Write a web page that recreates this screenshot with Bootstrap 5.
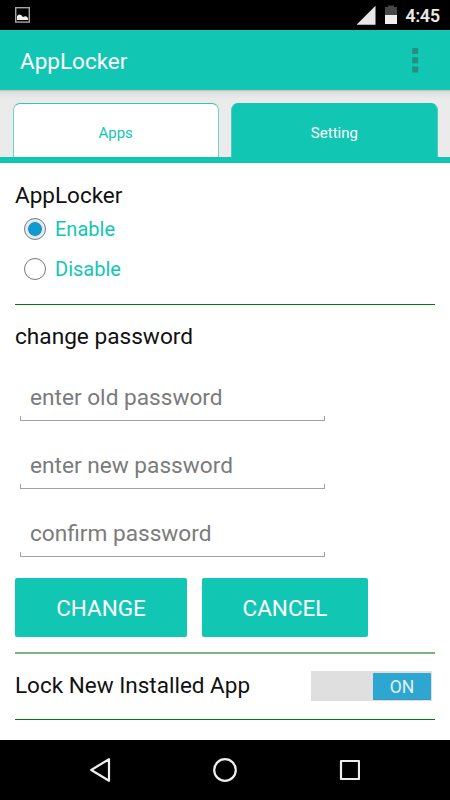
<!DOCTYPE html>
<html lang="en">
<head>
<meta charset="utf-8">
<meta name="viewport" content="width=device-width, initial-scale=1">
<title>AppLocker</title>
<link href="https://cdn.jsdelivr.net/npm/bootstrap@5.3.0/dist/css/bootstrap.min.css" rel="stylesheet">
<style>
:root { --teal: #12c6b4; }
body { font-family: Roboto, "Noto Sans", sans-serif; font-size: 22.5px; line-height: 30px; color: #111; }
.screen { width: 450px; height: 800px; }
.status-bar { height: 30px; padding: 0 10px 0 15px; }
.clock { font-size: 17.5px; font-weight: 500; color: #ebebeb; margin-left: 8px; padding-top: 1px; -webkit-text-stroke: .2px #ebebeb; }
.app-bar { height: 60px; padding: 1px 31px 0 20px; background: var(--teal); }
.tab-strip { height: 73px; padding: 13px 12.5px 0 12.5px; gap: 12.5px; border-bottom: 6px solid var(--teal);
  background: linear-gradient(#c4bfbe, #dedede 2px, #e5e5e5 5px, #ebebeb 10px); }
.tab-strip .nav-link { font-size: 15px; line-height: 20px; height: 54px; padding: 4px 0 0; color: var(--teal);
  background: #fff; border: 1px solid #6fd2c5; border-top-color: #35c5b5; border-bottom: 0; border-radius: 7px 7px 0 0; }
.tab-strip .nav-link.active { background: var(--teal); color: #fff; border-color: #4fcbbd; border-top-color: var(--teal); }
.content { padding: 17px 15px 0; height: 577px; }
.title { height: 29px; }
.choice { height: 40px; padding-left: 9px; gap: 9px; font-size: 20px; color: var(--teal); }
.choice .form-check-input { width: 22px; height: 22px; margin: 0; border: 1px solid #777; background: #fff; box-shadow: none; }
.choice .form-check-input:checked { border-color: #777;
  background: radial-gradient(circle, #0c9cd3 0 5.5px, #3b87a5 6.2px 6.5px, #cfeaf6 7.2px, #dcf0f8 9px, #e8f5fa 10px); }
.rule { height: 1px; background: #087808; }
.rule-soft { height: 2px; background: #7eb27e; }
.subhead { margin: 17px 0 31px; font-size: 22.65px; }
.field { width: 305px; height: 38px; margin: 0 0 30px 5px; }
.field input { font-size: 22.65px; line-height: 28px; height: 29px; padding: 0 10px; background: none; }
.field input::placeholder { color: #7b7b7b; opacity: 1; }
.field-base { height: 5px; margin-top: 4px; border: 1px solid #a2a2a2; border-top: 0; }
.action { height: 59px; padding: 3px 0 0; font-size: 22.5px; border: 0; border-radius: 2px; background: var(--teal); color: #fff; }
.action:hover { background: var(--teal); color: #fff; }
.change { width: 172px; }
.cancel { width: 166px; }
.lock-row { height: 65px; padding-bottom: 1px; }
.lock-row > span { padding-bottom: 2px; }
.toggle { width: 121px; height: 30px; padding: 2px; background: #dfdfdf; margin-right: 3px; }
.knob { width: 58px; height: 27px; margin-right: -1px; font-size: 17.5px; line-height: 28px; color: #e2f2fa; background: #2ea6d2; border-radius: 1px; border-bottom: 1px solid #3d97b8; }
.nav-keys { height: 60px; }
</style>
</head>
<body>
<div class="screen d-flex flex-column bg-white overflow-hidden">
  <div class="status-bar d-flex align-items-center bg-black">
    <svg width="15" height="16" viewBox="0 0 15 16"><rect x=".7" y=".7" width="13.6" height="14.4" fill="none" stroke="#a5a5a5" stroke-width="1.4"/><path d="M2 13V9L4 7.6l2 .3 2 2.2 2-.8 1.5.2L13 11v2z" fill="#f0f0f0"/></svg>
    <svg class="ms-auto" width="20" height="20" viewBox="0 0 20 20"><path d="M-.5 19.7 18.5 .8v18.9z" fill="#e8e8e8"/></svg>
    <svg width="12" height="20" viewBox="0 0 12 20" style="margin:0 1px 0 8px"><path d="M0 2h3V.5h6V2h3v8H0z" fill="#474747"/><path d="M0 10h12v9H0z" fill="#efefef"/></svg>
    <span class="clock">4:45</span>
  </div>
  <header class="app-bar d-flex align-items-center justify-content-between text-white">
    <span>AppLocker</span>
    <svg width="7" height="26" viewBox="0 0 7 26"><path d="M.2 0h6v6h-6zM.2 9.3h6v6h-6zM.2 18.4h6v6h-6z" fill="#258f82"/></svg>
  </header>
  <nav class="tab-strip nav nav-fill flex-nowrap">
    <a class="nav-link flex-fill w-50 d-flex align-items-center justify-content-center" href="#">Apps</a>
    <a class="nav-link active flex-fill w-50 d-flex align-items-center justify-content-center" href="#">Setting</a>
  </nav>
  <main class="content">
    <div class="title">AppLocker</div>
    <label class="choice d-flex align-items-center"><input class="form-check-input" type="radio" name="lock" checked>Enable</label>
    <label class="choice d-flex align-items-center"><input class="form-check-input" type="radio" name="lock">Disable</label>
    <div class="rule" style="margin-top:15px"></div>
    <div class="subhead">change password</div>
    <div class="field"><input class="border-0 w-100 d-block" type="text" placeholder="enter old password"><div class="field-base"></div></div>
    <div class="field"><input class="border-0 w-100 d-block" type="text" placeholder="enter new password"><div class="field-base"></div></div>
    <div class="field mb-0"><input class="border-0 w-100 d-block" type="text" placeholder="confirm password"><div class="field-base"></div></div>
    <div class="d-flex" style="gap:15px;margin-top:21px">
      <button class="btn action change">CHANGE</button>
      <button class="btn action cancel">CANCEL</button>
    </div>
    <div class="rule-soft" style="margin-top:15px"></div>
    <div class="lock-row d-flex align-items-center justify-content-between">
      <span>Lock New Installed App</span>
      <div class="toggle d-flex justify-content-end"><div class="knob text-center">ON</div></div>
    </div>
    <div class="rule"></div>
  </main>
  <footer class="nav-keys bg-black d-flex align-items-center justify-content-center">
    <svg width="270" height="28" viewBox="0 0 270 28" fill="none" stroke="#eee" stroke-width="2.2" stroke-linejoin="round"><path d="M19 3.2v21.6L1.2 14z"/><circle cx="135" cy="14" r="10.8"/><rect x="251" y="5" width="18" height="18"/></svg>
  </footer>
</div>
<script src="https://cdn.jsdelivr.net/npm/bootstrap@5.3.0/dist/js/bootstrap.bundle.min.js"></script>
</body>
</html>
